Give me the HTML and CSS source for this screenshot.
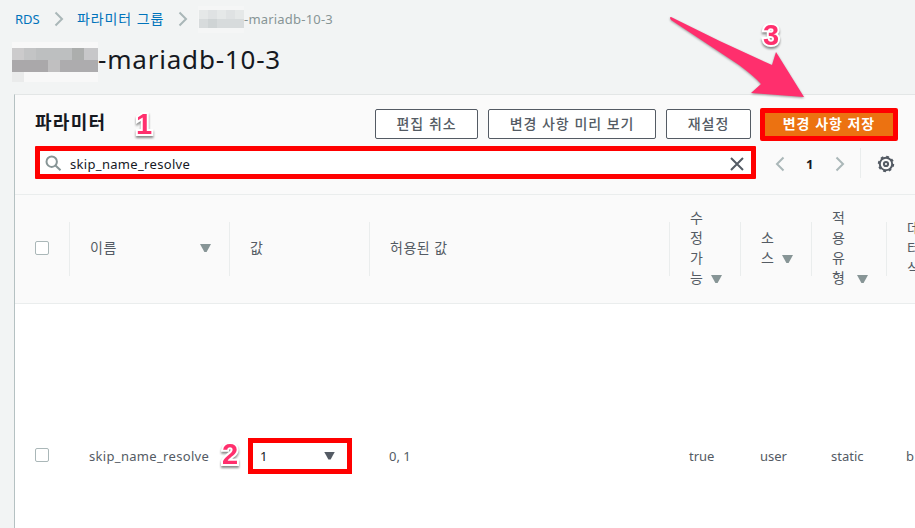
FILE: index.html
```html
<!DOCTYPE html>
<html lang="ko">
<head>
<meta charset="utf-8">
<title>RDS - 파라미터 그룹</title>
<link rel="stylesheet" href="styles.css">
</head>
<body>
<nav class="breadcrumb">
  <a class="crumb rds">RDS</a>
  <svg class="sep" width="10" height="16" viewBox="0 0 10 16"><path d="M1.5 1.5 8 8 1.5 14.5"/></svg>
  <a class="crumb group">파라미터 그룹</a>
  <svg class="sep sep2" width="10" height="16" viewBox="0 0 10 16"><path d="M1.5 1.5 8 8 1.5 14.5"/></svg>
  <svg class="mask-small" width="46" height="28" viewBox="0 0 46 28" shape-rendering="crispEdges">
    <path fill="#f5f6f6" d="M0 1h46v27H0z"/>
    <path fill="#e5e8e8" d="M1 5h45v9H1z"/>
    <path fill="#dfe2e3" d="M10 5h9v9h-9zM28 5h9v9h-9z"/>
    <path fill="#d7dbdc" d="M1 14h45v9H1z"/>
    <path fill="#cfd4d5" d="M10 14h9v9h-9z"/>
  </svg>
  <span class="crumb current">-mariadb-10-3</span>
</nav>
<header class="title">
  <svg class="mask-large" width="94" height="40" viewBox="0 0 94 40" shape-rendering="crispEdges">
    <path fill="#f8f8f8" d="M8 0h86v40H20v-9H8z"/>
    <path fill="#eaebeb" d="M8 30h12v10H8z"/>
    <path fill="#cccbcc" d="M8 6h12v12H8z"/>
    <path fill="#c3c4c5" d="M20 6h12v12H20z"/>
    <path fill="#bdbfc0" d="M32 6h36v12H32z"/>
    <path fill="#acaead" d="M68 6h12v12H68z"/>
    <path fill="#c7c7c9" d="M80 6h14v12H80z"/>
    <path fill="#aaa8aa" d="M8 18h36v12H8z"/>
    <path fill="#c0bfc0" d="M44 18h12v12H44z"/>
    <path fill="#adacae" d="M56 18h38v12H56z"/>
  </svg>
  <h1>-mariadb-10-3</h1>
</header>
<main class="panel">
  <section class="toolbar">
    <div class="actions">
      <h2>파라미터</h2>
      <button class="btn cancel">편집 취소</button>
      <button class="btn preview">변경 사항 미리 보기</button>
      <button class="btn reset">재설정</button>
      <button class="btn save">변경 사항 저장</button>
    </div>
    <div class="filter">
      <div class="search">
        <svg width="17" height="17" viewBox="0 0 17 17" class="lens"><circle cx="6.7" cy="6.7" r="5.2"/><path d="m10.5 10.5 5 4.8"/></svg>
        <span class="query">skip_name_resolve</span>
        <svg width="14" height="14" viewBox="0 0 14 14" class="clear"><path d="m1 1 12 12M13 1 1 13"/></svg>
      </div>
      <svg class="page-arrow" width="10" height="16" viewBox="0 0 10 16"><path d="M8.5 1.5 2 8l6.5 6.5"/></svg>
      <span class="page">1</span>
      <svg class="page-arrow" width="10" height="16" viewBox="0 0 10 16"><path d="M1.5 1.5 8 8 1.5 14.5"/></svg>
      <span class="rule"></span>
      <svg class="gear" width="18" height="18" viewBox="0 0 18 18"><circle class="teeth" cx="9" cy="9" r="7.2"/><circle cx="9" cy="9" r="6.2"/><circle cx="9" cy="9" r="2.1"/></svg>
    </div>
  </section>
  <section class="grid head">
    <div class="cell check"><i class="box"></i></div>
    <div class="cell"><span>이름</span><i class="tri"></i></div>
    <div class="cell"><span>값</span></div>
    <div class="cell"><span>허용된 값</span></div>
    <div class="cell tall"><div class="stack"><span>수<br>정<br>가<br>능</span><i class="tri"></i></div></div>
    <div class="cell tall"><div class="stack"><span>소<br>스</span><i class="tri"></i></div></div>
    <div class="cell tall"><div class="stack"><span>적<br>용<br>유<br>형</span><i class="tri"></i></div></div>
    <div class="cell last"><span>데<br>터<br>식</span></div>
  </section>
  <section class="grid row">
    <div class="cell check"><i class="box"></i></div>
    <div class="cell"><span class="name">skip_name_resolve</span></div>
    <div class="cell value"><div class="select"><span>1</span><i class="tri"></i></div></div>
    <div class="cell"><span>0, 1</span></div>
    <div class="cell"><span>true</span></div>
    <div class="cell"><span>user</span></div>
    <div class="cell"><span>static</span></div>
    <div class="cell last"><span>b</span></div>
  </section>
</main>
<span class="mark one">1</span>
<span class="mark two">2</span>
<span class="mark three">3</span>
<svg class="arrow" width="150" height="90" viewBox="665 12 150 90"><path d="M671 17Q720 42 772 65L776 52 804 97 751 93 761 84Q755 77 739 65L671 20Q669 17 671 17Z"/></svg>
</body>
</html>
```
FILE: styles.css
```css
* { box-sizing: border-box; }
body {
  margin: 0;
  width: 915px;
  height: 528px;
  overflow: hidden;
  background: #f2f4f4;
  color: #545b64;
  font: 13px/20px "Noto Sans", "Noto Sans CJK KR", sans-serif;
}
svg { display: block; flex: none; }
h1, h2 { margin: 0; }
.breadcrumb {
  display: flex;
  height: 38px;
  padding-left: 15px;
  align-items: center;
  white-space: nowrap;
}
.crumb { color: #0073bb; }
.rds { width: 39px; }
.group { width: 101px; font-size: 14px; letter-spacing: .9px; }
.current { color: #879596; letter-spacing: .2px; }
.sep { width: 10px; margin-right: 13px; }
.sep2 { margin-right: 10px; }
.sep path, .page-arrow path { fill: none; stroke: #aab7b8; stroke-width: 2; }
.title { display: flex; height: 56px; padding: 4px 0 0 4px; }
h1 { color: #16191f; font-size: 26px; font-weight: 400; line-height: 34px; letter-spacing: .8px; white-space: nowrap; }
.panel {
  width: 901px;
  height: 434px;
  margin-left: 14px;
  border-left: 1px solid #b5c1c2;
  border-top: 1px solid #e3e6e6;
  background: #fff;
  overflow: hidden;
}
.toolbar { height: 100px; background: #fafafa; border-bottom: 1px solid #eaeded; padding: 13px 0 0 20px; }
.actions { display: flex; align-items: flex-start; height: 33px; }
h2 { width: 340px; color: #16191f; font-size: 18px; font-weight: 700; line-height: 28px; letter-spacing: 1.3px; }
.btn {
  height: 30px;
  margin-top: 1px;
  padding: 0 0 3px;
  margin-right: 10px;
  border: 1px solid #545b64;
  border-radius: 2px;
  background: #fff;
  color: #545b64;
  font: 500 14px/20px "Noto Sans CJK KR", sans-serif;
  letter-spacing: .9px;
  white-space: nowrap;
  flex: none;
}
.cancel { width: 103px; }
.preview { width: 168px; }
.reset { width: 85px; margin-right: 9px; }
.save { width: 138px; height: 33px; margin: 0; border: 5px solid #f00; background: #ec7211; color: #fff; font-weight: 700; }
.filter { display: flex; align-items: center; margin-top: 5px; height: 33px; }
.search { display: flex; align-items: center; width: 721px; height: 33px; padding: 0 7px 0 5px; border: 5px solid #f00; border-radius: 1px; background: #fff; color: #16191f; }
.lens, .clear, .gear { fill: none; stroke: #879596; stroke-width: 2; }
.lens, .clear, .page-arrow, .gear { margin-top: 2px; }
.query { flex: 1; margin-left: 8px; padding-top: 2px; letter-spacing: .32px; }
.name { letter-spacing: .32px; }
.clear { stroke: #545b64; }
.page-arrow { margin-left: 19px; }
.page { width: 8px; margin-left: 21px; padding-top: 2px; color: #16191f; font-weight: 700; }
.page + .page-arrow { margin-left: 21px; }
.rule { width: 1px; height: 30px; margin: 0 16px 0 15px; background: #eaeded; }
.gear { stroke: #545b64; }
.teeth { stroke-width: 2; stroke-dasharray: 2.8 2.85; }
.grid { display: grid; grid-template-columns: 55px 160px 140px 300px 71px 71px 75px 60px; align-items: center; }
.head { height: 109px; background: #fafafa; border-bottom: 1px solid #eaeded; }
.cell { display: flex; align-items: center; justify-content: space-between; padding: 0 18px 0 20px; }
.head .cell { height: 54px; padding-bottom: 2px; border-right: 1px solid #eaeded; font-size: 14px; letter-spacing: .5px; }
.head .last { border: 0; }
.stack { flex: 1; display: flex; align-items: flex-end; justify-content: space-between; }
.stack .tri { margin-bottom: 5px; }
.box { width: 14px; height: 14px; border: 1px solid #aab7b8; border-radius: 2px; background: #fff; }
.tri { width: 11px; height: 8px; background: #879596; clip-path: polygon(0 0, 100% 0, 60% 100%, 40% 100%); }
.row { height: 303px; }
.row .cell { padding-left: 19px; }
.row .check { padding-left: 20px; padding-bottom: 2px; }
.row .value { padding: 0 0 0 18px; }
.select { display: flex; flex: none; align-items: center; justify-content: space-between; width: 104px; height: 36px; padding: 0 12px 0 7px; border: 5px solid #f00; color: #16191f; }
.select .tri { background: #545b64; }
.mark {
  position: absolute;
  color: #ff2f6d;
  font: 700 29px/32px "Liberation Sans", sans-serif;
  -webkit-text-stroke: 4px #fff;
  paint-order: stroke fill;
  filter: drop-shadow(0 2px 1px #888);
}
.one { left: 136px; top: 108px; }
.two { left: 222px; top: 438px; }
.three { left: 763px; top: 19px; }
.arrow { position: absolute; left: 665px; top: 12px; fill: #ff2f6d; filter: drop-shadow(0 1px 1px #999); }
```
